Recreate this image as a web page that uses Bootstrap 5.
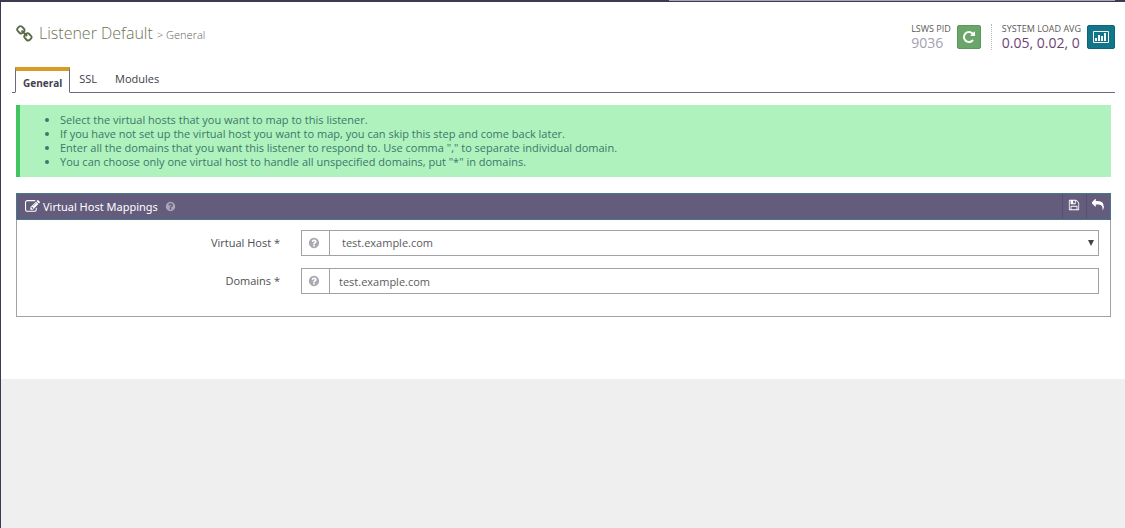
<!DOCTYPE html>
<html lang="en">
<head>
<meta charset="utf-8">
<meta name="viewport" content="width=device-width, initial-scale=1">
<title>Listener Default - General</title>
<link href="https://cdn.jsdelivr.net/npm/bootstrap@5.3.0/dist/css/bootstrap.min.css" rel="stylesheet">
<style>
body { font-family: "Open Sans", "Noto Sans", sans-serif; font-size: 11px; line-height: 14px; color: #4c4f53; background: #efefef; }
svg { display: block; fill: currentColor; flex: none; }
.shell { min-height: 100vh; border-left: 1px solid #3f3850; }
.topline { height: 2px; background: #3f3850; padding-right: 10px; }
.topline div { height: 1px; width: 40%; background: #a8a4bc; }
.content-area { padding: 21px 10px 62px 11px; }
.page-title { font-weight: 300; font-size: 16px; line-height: 20px; color: #6e7357; column-gap: 5px; }
.page-title small { font-size: 11px; color: #5f6158; }
.page-title svg { color: #5b6b49; }
.stat-group { column-gap: 6px; }
.stat-label { font-size: 9px; line-height: 12px; color: #5a5a5a; }
.stat-value { font-size: 14px; line-height: 16px; color: #a4a0b2; }
.stat-load { color: #6b4573; }
.stat-split { border-left: 1px dotted #b5b5b5; height: 26px; margin: 0 8px 0 10px; }
.btn-stat { height: 24px; border-radius: 2px; color: #fff; }
.btn-restart { width: 24px; background: #6aa56a; border-color: #5d975d; }
.btn-graph { width: 28px; background: #12758a; border-color: #0d6577; }
.btn-stat:hover { color: #fff; background: #3c6c74; }
.nav-tabs.main-tabs { --bs-nav-tabs-border-color: #6a6a80; margin-top: 16px; padding-left: 3px; }
.main-tabs .nav-link { color: #3d3d48; font-size: 11px; line-height: 14px; padding: 4px 9px 7px; border-radius: 0; border: 0; margin-bottom: -1px; }
.main-tabs .nav-link.active { font-size: 10px; font-weight: 700; color: #45424f; padding: 5px 7px 2px; border: 1px solid #6a6a80; border-top: 4px solid #d89b25; border-bottom-color: #fff; }
.panel-inset { margin: 0 4px; }
.hint { margin-top: 12px; padding: 8px 10px; background: #b0f2be; color: #3b7868; border-left: 4px solid #41c560; }
.hint ul { padding-left: 30px; }
.mapping { margin-top: 16px; border: 1px solid #a2a2a6; border-top: 0; }
.mapping-head { height: 27px; margin: 0 -1px; padding-left: 8px; background: #645c7c; border: 1px solid #46788a; color: #fff; }
.mapping-head h2 { font-family: "Noto Sans", sans-serif; font-size: 11px; line-height: 14px; font-weight: 400; margin: 0 7px 0 3px; }
.mapping-head .help-mark { color: #aaa6b8; }
.head-btn { width: 24px; height: 25px; padding: 0 2px 3px 0; color: #fff; border: 0; border-left: 1px solid #57506d; border-radius: 0; }
.mapping-body { padding: 10px 11px 22px 16px; }
.field-row { display: grid; grid-template-columns: 247px 1fr; column-gap: 21px; align-items: center; margin-bottom: 12px; }
.field-row:last-child { margin-bottom: 0; }
.field-row label { text-align: right; }
.field-row .input-group-text { width: 29px; padding: 0 3px 0 0; background: #fff; color: #a9a9b2; }
.field-row .input-group-text, .field-row .form-control, .field-row .form-select { height: 26px; border: 1px solid #a2a2a6; border-radius: 0; }
.field-row .form-control, .field-row .form-select { font-size: 11px; line-height: 14px; padding: 4px 9px; color: #5c5c5c; }
.field-row .form-select { padding-left: 12px; background: #fff url("data:image/svg+xml,%3Csvg xmlns='http://www.w3.org/2000/svg' viewBox='0 0 6 6'%3E%3Cpath fill='%23444' d='M0 0h6L3 6z'/%3E%3C/svg%3E") no-repeat right 4px top 9px / 6px 6px; }
</style>
</head>
<body>
<div class="shell">
  <div class="topline d-flex justify-content-end"><div></div></div>
  <main class="content-area bg-white">
    <header class="d-flex justify-content-between align-items-start">
      <h1 class="page-title d-flex align-items-center mb-0 ms-1">
        <svg width="18" height="18" viewBox="0 0 1792 1792" aria-hidden="true"><path d="M1456 1216q0-40-28-68l-208-208q-28-28-68-28-42 0-72 32 3 3 19 18.500t21.500 21.500 15 19 13 25.500 3.500 27.500q0 40-28 68t-68 28q-15 0-27.500-3.500t-25.500-13-19-15-21.500-21.500-18.500-19q-33 31-33 73 0 40 28 68l206 207q27 27 68 27 40 0 68-26l147-146q28-28 28-67zm-703-705q0-40-28-68l-206-207q-28-28-68-28-39 0-68 27l-147 146q-28 28-28 67 0 40 28 68l208 208q27 27 68 27 42 0 72-31-3-3-19-18.500t-21.500-21.500-15-19-13-25.500-3.500-27.500q0-40 28-68t68-28q15 0 27.500 3.500t25.500 13 19 15 21.500 21.500 18.500 19q33-31 33-73zm895 705q0 120-85 203l-147 146q-83 83-203 83-121 0-204-85l-206-207q-83-83-83-203 0-123 88-209l-88-88q-86 88-208 88-120 0-204-84l-208-208q-84-84-84-204t85-203l147-146q83-83 203-83 121 0 204 85l206 207q83 83 83 203 0 123-88 209l88 88q86-88 208-88 120 0 204 84l208 208q84 84 84 204z"/></svg>
        <span>Listener Default <small>&gt; General</small></span>
      </h1>
      <div class="stat-group d-flex align-items-center">
        <div><div class="stat-label">LSWS PID</div><div class="stat-value">9036</div></div>
        <button type="button" class="btn btn-stat btn-restart d-flex align-items-center justify-content-center p-0" aria-label="Restart server">
          <svg width="14" height="14" viewBox="0 0 1792 1792"><path d="M1664 256v448q0 26-19 45t-45 19h-448q-42 0-59-40-17-39 14-69l138-138q-148-137-349-137-104 0-198.500 40.500t-163.500 109.500-109.500 163.500-40.500 198.500 40.500 198.500 109.500 163.500 163.500 109.500 198.500 40.500q119 0 225-52t179-147q7-10 23-12 15 0 25 9l137 138q9 8 9.500 20.500t-7.500 22.500q-109 132-264 204.500t-327 72.500q-156 0-298-61t-245-164-164-245-61-298 61-298 164-245 245-164 298-61q147 0 284.500 55.500t244.500 156.500l130-129q29-31 70-14 39 17 39 59z"/></svg>
        </button>
        <div class="stat-group d-flex align-items-center">
          <div class="stat-split ms-1 me-0"></div>
          <div class="ms-1"><div class="stat-label">SYSTEM LOAD AVG</div><div class="stat-value stat-load">0.05, 0.02, 0</div></div>
          <button type="button" class="btn btn-stat btn-graph d-flex align-items-center justify-content-center p-0" aria-label="Load statistics">
            <svg width="16" height="14" viewBox="0 0 16 14"><path fill-rule="evenodd" d="M1 1h14a1 1 0 0 1 1 1v10a1 1 0 0 1-1 1H1a1 1 0 0 1-1-1V2a1 1 0 0 1 1-1zm0 1v10h14V2zM2 8h2v3H2zM5 5h2v6H5zM8 6h2v5H8zM11 3h2v8h-2z"/></svg>
          </button>
        </div>
      </div>
    </header>

    <ul class="nav nav-tabs main-tabs align-items-end">
      <li class="nav-item"><a class="nav-link active" aria-current="page" href="#general">General</a></li>
      <li class="nav-item"><a class="nav-link" href="#ssl">SSL</a></li>
      <li class="nav-item"><a class="nav-link" href="#modules">Modules</a></li>
    </ul>

    <div class="panel-inset">
      <div class="hint">
        <ul class="mb-0">
          <li>Select the virtual hosts that you want to map to this listener.</li>
          <li>If you have not set up the virtual host you want to map, you can skip this step and come back later.</li>
          <li>Enter all the domains that you want this listener to respond to. Use comma "," to separate individual domain.</li>
          <li>You can choose only one virtual host to handle all unspecified domains, put "*" in domains.</li>
        </ul>
      </div>

      <section class="mapping">
        <div class="mapping-head d-flex align-items-center">
          <svg width="15" height="15" viewBox="0 0 1792 1792" aria-hidden="true"><path d="M888 1184l116-116-152-152-116 116v56h96v96h56zm440-720q-16-16-33 1l-350 350q-17 17-1 33t33-1l350-350q17-17 1-33zm80 594v190q0 119-84.500 203.500t-203.500 84.500h-832q-119 0-203.500-84.500t-84.500-203.500v-832q0-119 84.500-203.500t203.500-84.500h832q63 0 117 25 15 7 18 23 3 17-9 29l-49 49q-14 14-32 8-23-6-45-6h-832q-66 0-113 47t-47 113v832q0 66 47 113t113 47h832q66 0 113-47t47-113v-126q0-13 9-22l64-64q15-15 35-7t20 29zm-96-738l288 288-672 672h-288v-288zm444 132l-92 92-288-288 92-92q28-28 68-28t68 28l152 152q28 28 28 68t-28 68z"/></svg>
          <h2>Virtual Host Mappings</h2>
          <svg class="help-mark" width="11" height="11" viewBox="0 0 1792 1792" aria-hidden="true"><path id="help-glyph" d="M1024 1376v-192q0-14-9-23t-23-9h-192q-14 0-23 9t-9 23v192q0 14 9 23t23 9h192q14 0 23-9t9-23zm256-672q0-88-55.500-163t-138.500-116-170-41q-243 0-371 213-15 24 8 42l132 100q7 6 19 6 16 0 25-12 53-68 86-92 34-24 86-24 48 0 85.500 26t37.500 59q0 38-20 61t-68 45q-63 28-115.500 86.500t-52.500 125.500v36q0 14 9 23t23 9h192q14 0 23-9t9-23q0-19 21.500-49.500t54.500-49.500q32-18 49-28.500t46-35 44.500-48 28-60.500 12.500-81zm384 192q0 209-103 385.500t-279.500 279.500-385.500 103-385.500-103-279.500-279.500-103-385.500 103-385.500 279.500-279.500 385.500-103 385.500 103 279.500 279.500 103 385.500z"/></svg>
          <button type="button" class="btn head-btn ms-auto d-flex align-items-center justify-content-center" aria-label="Save">
            <svg width="12" height="12" viewBox="0 0 1792 1792"><path d="M512 1536h768v-384h-768v384zm896 0h128v-896q0-14-10-38.500t-20-34.500l-281-281q-10-10-34-20t-39-10v416q0 40-28 68t-68 28h-576q-40 0-68-28t-28-68v-416h-128v1280h128v-416q0-40 28-68t68-28h832q40 0 68 28t28 68v416zm-384-928v-320q0-13-9.500-22.500t-22.500-9.500h-192q-13 0-22.500 9.500t-9.500 22.500v320q0 13 9.500 22.500t22.500 9.500h192q13 0 22.500-9.500t9.500-22.500zm640 32v928q0 40-28 68t-68 28h-1344q-40 0-68-28t-28-68v-1344q0-40 28-68t68-28h928q40 0 88 20t76 48l280 280q28 28 48 76t20 88z"/></svg>
          </button>
          <button type="button" class="btn head-btn d-flex align-items-center justify-content-center" aria-label="Back">
            <svg width="12" height="12" viewBox="0 0 1792 1792"><path d="M1792 1120q0 166-127 451-3 7-10.500 24t-13.500 30-13 22q-12 17-28 17-15 0-23.500-10t-8.500-25q0-9 2.500-26.500t2.500-23.500q5-68 5-123 0-112-19.500-200.500t-54-153.500-89-112-117-79.500-147-51-169-24-193.500-7.500h-224v256q0 26-19 45t-45 19-45-19l-512-512q-19-19-19-45t19-45l512-512q19-19 45-19t45 19 19 45v256h224q713 0 875 403 53 134 53 333z"/></svg>
          </button>
        </div>
        <form class="mapping-body">
          <div class="field-row">
            <label for="vhost">Virtual Host *</label>
            <div class="input-group">
              <span class="input-group-text justify-content-center"><svg width="12" height="12" viewBox="0 0 1792 1792" aria-hidden="true"><use href="#help-glyph"/></svg></span>
              <select class="form-select" id="vhost"><option selected>test.example.com</option></select>
            </div>
          </div>
          <div class="field-row">
            <label for="domains">Domains *</label>
            <div class="input-group">
              <span class="input-group-text justify-content-center"><svg width="12" height="12" viewBox="0 0 1792 1792" aria-hidden="true"><use href="#help-glyph"/></svg></span>
              <input type="text" class="form-control" id="domains" value="test.example.com">
            </div>
          </div>
        </form>
      </section>
    </div>
  </main>
</div>
<script src="https://cdn.jsdelivr.net/npm/bootstrap@5.3.0/dist/js/bootstrap.bundle.min.js"></script>
</body>
</html>
